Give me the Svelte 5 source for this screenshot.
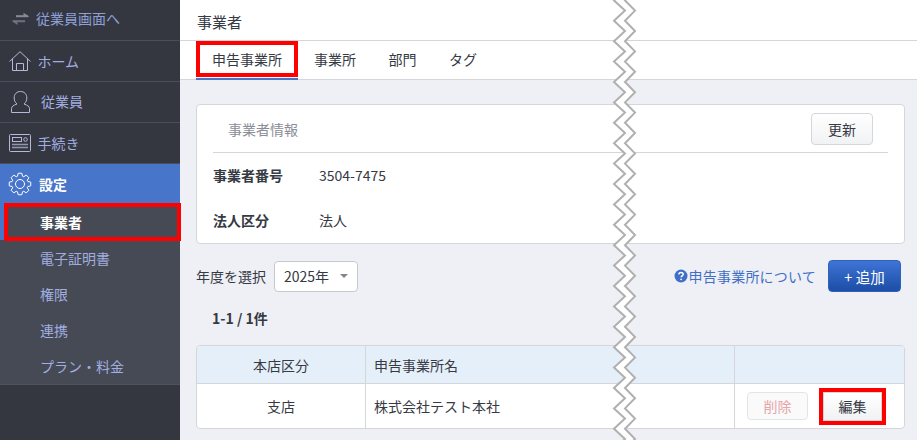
<script>
  const menu = ['電子証明書', '権限', '連携', 'プラン・料金'];
  const tabs = ['申告事業所', '事業所', '部門', 'タグ'];

  // torn-page divider: zigzag drawn over the content
  const left = [];
  const right = [];
  for (let i = -2; i < 46; i++) {
    const y = i * 10.2 + 0.4;
    const odd = Math.abs(i) % 2 === 1;
    left.push(`${odd ? 625 : 614},${y}`);
    right.push(`${odd ? 635 : 625},${y}`);
  }
  const leftLine = left.join(' ');
  const rightLine = right.join(' ');
  const tear = [...left, ...right.slice().reverse()].join(' ');

  // settings icon outline
  const gear = [];
  for (let i = 0; i < 8; i++) {
    const a = (i * Math.PI) / 4;
    for (const [d, r] of [[-0.31, 8.2], [-0.17, 10.9], [0.17, 10.9], [0.31, 8.2]]) {
      gear.push(`${(12 + r * Math.sin(a + d)).toFixed(2)},${(12 - r * Math.cos(a + d)).toFixed(2)}`);
    }
  }
  const gearPoints = gear.join(' ');
</script>

<div class="page">
  <aside class="side">
    <div class="nav-row top">
      <svg class="swap" width="19" height="14" viewBox="0 0 19 14">
        <path d="M5 4.200h12" stroke="#858b97" stroke-width="2"/>
        <path d="M12.500 .8 18.500 4.800h-6z" fill="#858b97"/>
        <path d="M14 9.200H2" stroke="#6c7380" stroke-width="2"/>
        <path d="M6.500 13 .5 8.700h6z" fill="#6c7380"/>
      </svg>
      <span>従業員画面へ</span>
    </div>
    <div class="nav-row">
      <svg class="ico home" width="22" height="20" viewBox="0 0 22 20" fill="none" stroke="#b4b9dc" stroke-width="1">
        <path d="M.5 10.500 11 .7l10.500 9.800M3.500 8v11.500h15V8M7.500 19.500v-7h7v7"/>
      </svg>
      <span>ホーム</span>
    </div>
    <div class="nav-row staff">
      <svg class="ico user" width="19" height="22" viewBox="0 0 19 22" fill="none" stroke="#b4b9dc" stroke-width="1">
        <path d="M.5 21.500v-4c0-2 2-3.300 5.500-4.500-1.800-1.500-2.800-3.400-2.800-6C3.200 3 5.700.5 9.500.5s6.300 2.500 6.300 6.500c0 2.600-1 4.500-2.800 6 3.500 1.200 5.500 2.500 5.500 4.500v4z"/>
      </svg>
      <span>従業員</span>
    </div>
    <div class="nav-row">
      <svg class="ico home" width="22" height="18" viewBox="0 0 22 18" fill="none" stroke="#b4b9dc" stroke-width="1">
        <rect x=".5" y=".5" width="21" height="17" rx="1"/>
        <rect x="3.500" y="3.500" width="9" height="4"/>
        <circle cx="16.500" cy="5.500" r="1.800"/>
        <path d="M3 10.500h16M3 13.500h16" stroke="#9297ae" stroke-width="1.500"/>
      </svg>
      <span>手続き</span>
    </div>
    <div class="group">
      <div class="nav-row active">
        <svg class="ico" width="24" height="24" viewBox="0 0 24 24" fill="none" stroke="#fff" stroke-width="1">
          <circle cx="12" cy="12" r="4.500"/>
          <polygon points={gearPoints}/>
        </svg>
        <span>設定</span>
      </div>
      <div class="sub-row current"><span>事業者</span></div>
    </div>
    <div class="sub">
      {#each menu as m}
        <div class="sub-row"><span>{m}</span></div>
      {/each}
    </div>
  </aside>

  <main class="main">
    <header class="head">事業者</header>
    <nav class="tabs">
      {#each tabs as t, i}
        <div class="tab" class:on={i === 0}>{t}</div>
      {/each}
    </nav>

    <div class="body">
      <section class="card">
        <div class="card-head">
          <span class="card-title">事業者情報</span>
          <button class="btn">更新</button>
        </div>
        <div class="info"><b>事業者番号</b><span>3504-7475</span></div>
        <div class="info"><b>法人区分</b><span>法人</span></div>
      </section>

      <div class="bar">
        <span class="year-label">年度を選択</span>
        <div class="select"><span>2025年</span><i class="caret"></i></div>
        <a class="help" href="#help">
          <svg width="14" height="14" viewBox="0 0 14 14">
            <circle cx="7" cy="7" r="6.500" fill="#3f6fc6"/>
            <path d="M4.800 5.400C4.900 4.100 5.800 3.400 7 3.400s2.200.7 2.200 1.900c0 1.500-2.100 1.500-2.100 3" fill="none" stroke="#fff" stroke-width="1.500"/>
            <circle cx="7.100" cy="10.300" r=".9" fill="#fff"/>
          </svg><span>申告事業所について</span>
        </a>
        <button class="add">+ 追加</button>
      </div>

      <div class="count">1-1 / 1件</div>

      <div class="table">
        <div class="row thead">
          <div class="c1">本店区分</div>
          <div class="c2">申告事業所名</div>
          <div class="c3"></div>
        </div>
        <div class="row">
          <div class="c1">支店</div>
          <div class="c2">株式会社テスト本社</div>
          <div class="c3 actions">
            <button class="btn del">削除</button>
            <button class="btn edit">編集</button>
          </div>
        </div>
      </div>
    </div>
  </main>

  <svg class="tear" width="917" height="440" viewBox="0 0 917 440">
    <polygon points={tear} fill="#fff"/>
    <polyline points={leftLine} fill="none" stroke="#b0b0b0" stroke-width="2"/>
    <polyline points={rightLine} fill="none" stroke="#b0b0b0" stroke-width="2"/>
  </svg>
</div>

<style>
  :global(body) {
    margin: 0;
    font-family: "Noto Sans CJK JP", "Noto Sans", sans-serif;
    font-size: 14px;
    color: #363a43;
  }

  .page {
    position: relative;
    display: flex;
    width: 917px;
    height: 440px;
    overflow: hidden;
    background: #eff0f5;
  }

  .side {
    width: 180px;
    flex-shrink: 0;
    background: #343740;
  }

  .nav-row {
    display: flex;
    align-items: center;
    height: 40px;
    padding-left: 9px;
    border-bottom: 1px solid #4a4d5c;
    color: #a3aee0;
  }

  .nav-row.top {
    padding-left: 11px;
    color: #8fa0d8;
  }

  .nav-row.top span,
  .nav-row.staff span {
    margin-top: -2px;
  }

  .nav-row.top span {
    margin-top: -4px;
  }

  .swap {
    margin: -2px 6px 0 0;
  }

  .ico {
    margin-right: 7px;
  }

  .home {
    margin-right: 6.500px;
  }

  .user {
    margin: 0 11px 0 2px;
  }

  .group {
    background: #4775ca;
  }

  .nav-row.active {
    background: #4775ca;
    color: #fff;
    font-weight: 700;
    border-bottom: none;
  }

  .nav-row.active .ico {
    margin: 0 7px 0 -1px;
  }

  .sub {
    background: #454a55;
    border-bottom: 1px solid #4e5260;
  }

  .sub-row {
    display: flex;
    align-items: center;
    height: 36px;
    padding-left: 40px;
    box-sizing: border-box;
    color: #a3aee0;
  }

  .sub-row.current {
    position: relative;
    color: #fff;
    font-weight: 700;
    background: #454a55;
    outline: 4px solid #f00;
    outline-offset: -3px;
    margin-left: 5px;
    padding-left: 35px;
  }

  .main {
    flex: 1;
    min-width: 0;
  }

  .head {
    height: 40px;
    padding-left: 17px;
    line-height: 44px;
    font-size: 15px;
    background: #fff;
    border-bottom: 1px solid #d5d6da;
  }

  .tabs {
    display: flex;
    height: 38px;
    padding-left: 16px;
    background: #fff;
    border-bottom: 1px solid #d5d6da;
  }

  .tab {
    padding: 0 16px;
    line-height: 36px;
    margin-right: .5px;
  }

  .tab.on {
    position: relative;
    border-bottom: 2px solid #4775ca;
    box-sizing: border-box;
    height: 39px;
    margin-right: 0;
  }

  /* red callout round the selected tab */
  .tab.on::after {
    content: '';
    position: absolute;
    inset: 0 0 1px;
    border: 4px solid #f00;
  }

  .body {
    padding: 24px 12px 0 16px;
  }

  .card {
    height: 140px;
    box-sizing: border-box;
    background: #fff;
    border: 1px solid #d5d6da;
    border-radius: 4px;
    padding: 0 16px;
  }

  .card-head {
    display: flex;
    align-items: center;
    justify-content: space-between;
    height: 47px;
    padding: 0 15px;
    border-bottom: 1px solid #d5d6da;
  }

  .card-title {
    color: #8b8e97;
  }

  .btn {
    font: inherit;
    color: #363a43;
    height: 32px;
    padding: 0 16px;
    background: linear-gradient(#fff, #f1f2f4);
    border: 1px solid #d5d6da;
    border-radius: 4px;
  }

  .info {
    display: flex;
    align-items: center;
    height: 45px;
    padding-bottom: 2px;
    box-sizing: border-box;
  }

  .info b {
    width: 106px;
  }

  .bar {
    display: flex;
    align-items: center;
    margin-top: 16px;
    padding-right: 4px;
    height: 32px;
  }

  .year-label {
    margin-right: 8px;
  }

  .select {
    display: flex;
    align-items: center;
    justify-content: space-between;
    width: 84px;
    height: 31px;
    padding: 0 9px 1px;
    box-sizing: border-box;
    background: #fff;
    border: 1px solid #c8c9ce;
    border-radius: 4px;
  }

  .caret {
    width: 0;
    height: 0;
    border: 4px solid transparent;
    border-top: 4px solid #83868d;
    margin: 4px 0 0;
  }

  .help {
    margin-left: auto;
    display: flex;
    align-items: center;
    gap: 1px;
    color: #3f6fc6;
    text-decoration: none;
    letter-spacing: .2px;
  }

  .add {
    font: inherit;
    font-size: 14.500px;
    color: #fff;
    margin-left: 12px;
    width: 73px;
    height: 32px;
    padding: 0;
    background: linear-gradient(#3f74d6, #1c4ea6);
    border: 1px solid #2f62bd;
    border-radius: 4px;
  }

  .count {
    font-weight: 700;
    padding-left: 16px;
    margin-top: 16px;
    height: 27px;
  }

  .table {
    margin-top: 10px;
    background: #fff;
    border: 1px solid #d5d6da;
    border-radius: 4px;
    overflow: hidden;
  }

  .row {
    display: flex;
    height: 44px;
    align-items: stretch;
  }

  .row.thead {
    height: 37px;
    background: #e5eff9;
    border-bottom: 1px solid #d5d6da;
  }

  .row > div {
    display: flex;
    align-items: center;
  }

  .c1 {
    width: 168px;
    justify-content: center;
    border-right: 1px solid #d5d6da;
  }

  .c2 {
    flex: 1;
    padding-left: 8px;
    border-right: 1px solid #d5d6da;
  }

  .c3 {
    width: 169px;
  }

  .actions {
    gap: 15px;
    padding-left: 12px;
    box-sizing: border-box;
  }

  .del {
    width: 61px;
    height: 28px;
    padding: 0;
    color: #e7a5a8;
    background: #fafafb;
    border-color: #e3e4e7;
  }

  .edit {
    width: 59px;
    height: 29px;
    padding: 0;
    outline: 4px solid #f00;
    border-radius: 0;
  }

  .tear {
    position: absolute;
    left: 0;
    top: 0;
    pointer-events: none;
  }
</style>
